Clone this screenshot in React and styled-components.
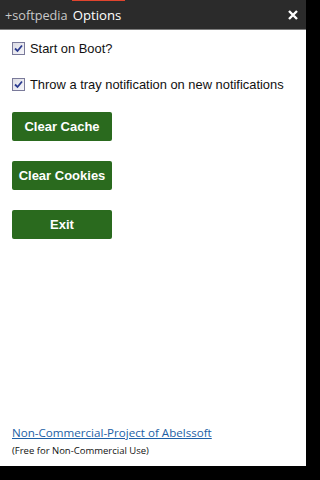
import React, { useState } from "react";
import styled, { createGlobalStyle } from "styled-components";

const GlobalStyle = createGlobalStyle`
  html, body {
    margin: 0;
    padding: 0;
    background: #000;
  }
  body {
    width: 320px;
    height: 480px;
    overflow: hidden;
  }
`;

const Window = styled.div`
  width: 306px;
  height: 466px;
  background: #fff;
  display: flex;
  flex-direction: column;
`;

const TitleBar = styled.div`
  height: 29px;
  background: #2b2b2b;
  border-bottom: 1px solid #7d7d7d;
  display: flex;
  align-items: center;
  padding: 0 0 0 5px;
  font-family: "Open Sans", "Noto Sans", sans-serif;
  font-size: 12.7px;
`;

const Brand = styled.span`
  color: #c8c8c8;
  margin-right: 5px;
`;

const Tab = styled.span`
  color: #fff;
  position: relative;
  padding-top: 1px;
  font-size: 13.2px;

  &::before {
    content: "";
    position: absolute;
    left: -1px;
    right: -4px;
    top: -7px;
    height: 3px;
    background: #e0442e;
  }
`;

const CloseBtn = styled.button`
  margin-left: auto;
  width: 26px;
  height: 29px;
  border: none;
  background: transparent;
  display: flex;
  align-items: center;
  justify-content: center;
  padding: 0;
  cursor: pointer;
`;

const Body = styled.div`
  flex: 1;
  display: flex;
  flex-direction: column;
  padding: 10px 12px 9px 12px;
  font-family: "Liberation Sans", Arial, sans-serif;
`;

const Options = styled.div`
  display: flex;
  flex-direction: column;
  gap: 20px;
`;

const CheckRow = styled.label`
  display: flex;
  align-items: center;
  gap: 4px;
  font-size: 12.9px;
  color: #111;
  height: 16px;
  white-space: nowrap;
  cursor: pointer;
`;

const Box = styled.span`
  width: 11px;
  height: 11px;
  border: 1px solid #7a7a9a;
  background: linear-gradient(135deg, #dcdce4 0%, #f6f6fa 100%);
  display: flex;
  align-items: center;
  justify-content: center;
  margin-right: 1px;
`;

const Buttons = styled.div`
  display: flex;
  flex-direction: column;
  gap: 20px;
  margin-top: 20px;
`;

const GreenButton = styled.button`
  width: 100px;
  height: 29px;
  background: #2a6a1e;
  color: #fff;
  border: none;
  border-radius: 2px;
  font-family: "Liberation Sans", Arial, sans-serif;
  font-weight: bold;
  font-size: 13px;
  padding: 0;
  cursor: pointer;
`;

const Footer = styled.div`
  margin-top: auto;
  display: flex;
  flex-direction: column;
  gap: 4px;
  font-family: "Open Sans", "Noto Sans", sans-serif;
`;

const Link = styled.a`
  color: #1d5fa6;
  font-size: 11.6px;
  text-decoration: underline;
`;

const Note = styled.span`
  color: #111;
  font-size: 9.5px;
`;

function Check({ checked, onChange, children }) {
  return (
    <CheckRow onClick={onChange}>
      <Box>
        {checked && (
          <svg width="9" height="9" viewBox="0 0 9 9">
            <path d="M1 4.5 L3.5 7 L8 1.5" fill="none" stroke="#2b3b8f" strokeWidth="1.8" />
          </svg>
        )}
      </Box>
      {children}
    </CheckRow>
  );
}

export default function App() {
  const [boot, setBoot] = useState(true);
  const [tray, setTray] = useState(true);

  return (
    <>
      <GlobalStyle />
      <Window>
        <TitleBar>
          <Brand>+softpedia</Brand>
          <Tab>Options</Tab>
          <CloseBtn>
            <svg width="10" height="10" viewBox="0 0 10 10">
              <path d="M1 1 L9 9 M9 1 L1 9" stroke="#fff" strokeWidth="2.4" />
            </svg>
          </CloseBtn>
        </TitleBar>
        <Body>
          <Options>
            <Check checked={boot} onChange={() => setBoot(!boot)}>
              Start on Boot?
            </Check>
            <Check checked={tray} onChange={() => setTray(!tray)}>
              Throw a tray notification on new notifications
            </Check>
          </Options>
          <Buttons>
            <GreenButton>Clear Cache</GreenButton>
            <GreenButton>Clear Cookies</GreenButton>
            <GreenButton>Exit</GreenButton>
          </Buttons>
          <Footer>
            <Link href="#">Non-Commercial-Project of Abelssoft</Link>
            <Note>(Free for Non-Commercial Use)</Note>
          </Footer>
        </Body>
      </Window>
    </>
  );
}
